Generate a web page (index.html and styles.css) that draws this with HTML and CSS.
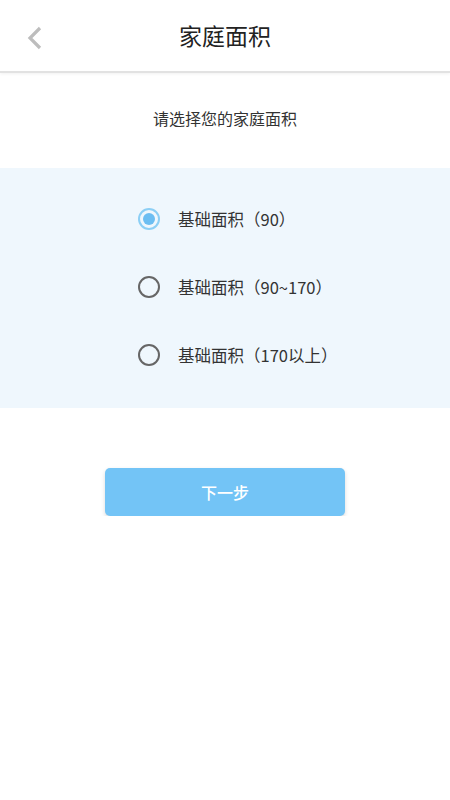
FILE: index.html
```html
<!DOCTYPE html>
<html lang="zh-CN">
<head>
    <meta charset="UTF-8">
    <meta name="viewport" content="width=device-width, initial-scale=1.0">
    <title>家庭面积</title>
    <link rel="stylesheet" href="styles.css">
</head>
<body>
    <div class="header">
        <button class="back">
            <svg width="16" height="24" viewBox="0 0 16 24"><path d="M13 2 L3 12 L13 22" fill="none" stroke="#bdbdbd" stroke-width="3.2"/></svg>
        </button>
        <h1 class="title">家庭面积</h1>
    </div>

    <p class="tip">请选择您的家庭面积</p>

    <div class="options">
        <label class="option checked">
            <span class="radio"></span>
            <span class="label">基础面积（90）</span>
        </label>
        <label class="option">
            <span class="radio"></span>
            <span class="label">基础面积（90~170）</span>
        </label>
        <label class="option">
            <span class="radio"></span>
            <span class="label">基础面积（170以上）</span>
        </label>
    </div>

    <div class="actions">
        <button class="next">下一步</button>
    </div>
</body>
</html>
```

FILE: styles.css
```css
*{
    margin: 0;
    padding: 0;
    box-sizing: border-box;
    font-family: "Noto Sans CJK SC", "Noto Sans", sans-serif;
}

body{
    background: #fff;
    color: #333;
}

.header{
    position: relative;
    height: 73px;
    display: flex;
    align-items: center;
    justify-content: center;
    border-bottom: 2px solid #e2e2e2;
    box-shadow: 0 1px 3px rgba(0,0,0,0.06);
}

.back{
    position: absolute;
    left: 25px;
    top: 26px;
    border: 0;
    background: none;
    width: 20px;
    height: 26px;
}

.title{
    font-size: 23px;
    font-weight: 400;
    color: #222;
    margin-top: -1px;
}

.tip{
    text-align: center;
    font-size: 16px;
    margin-top: 33px;
    color: #333;
}

.options{
    background: #eff7fd;
    margin-top: 38px;
    padding: 39px 0 41px 138px;
    display: flex;
    flex-direction: column;
    gap: 44px;
}

.option{
    display: flex;
    align-items: center;
    height: 24px;
}

.radio{
    width: 22px;
    height: 22px;
    border-radius: 50%;
    border: 2px solid #666;
    margin-right: 18px;
    display: flex;
    align-items: center;
    justify-content: center;
}

.option.checked .radio{
    border-color: #8ccff5;
}

.option.checked .radio::after{
    content: "";
    width: 12px;
    height: 12px;
    border-radius: 50%;
    background: #6cbef2;
}

.label{
    font-size: 16.5px;
    color: #333;
}

.actions{
    display: flex;
    justify-content: center;
    margin-top: 60px;
}

.next{
    width: 240px;
    height: 48px;
    border: 0;
    border-radius: 5px;
    background: #73c4f6;
    color: #fff;
    font-size: 16px;
    font-weight: 500;
    box-shadow: 0 2px 4px rgba(0,0,0,0.15);
}
```
